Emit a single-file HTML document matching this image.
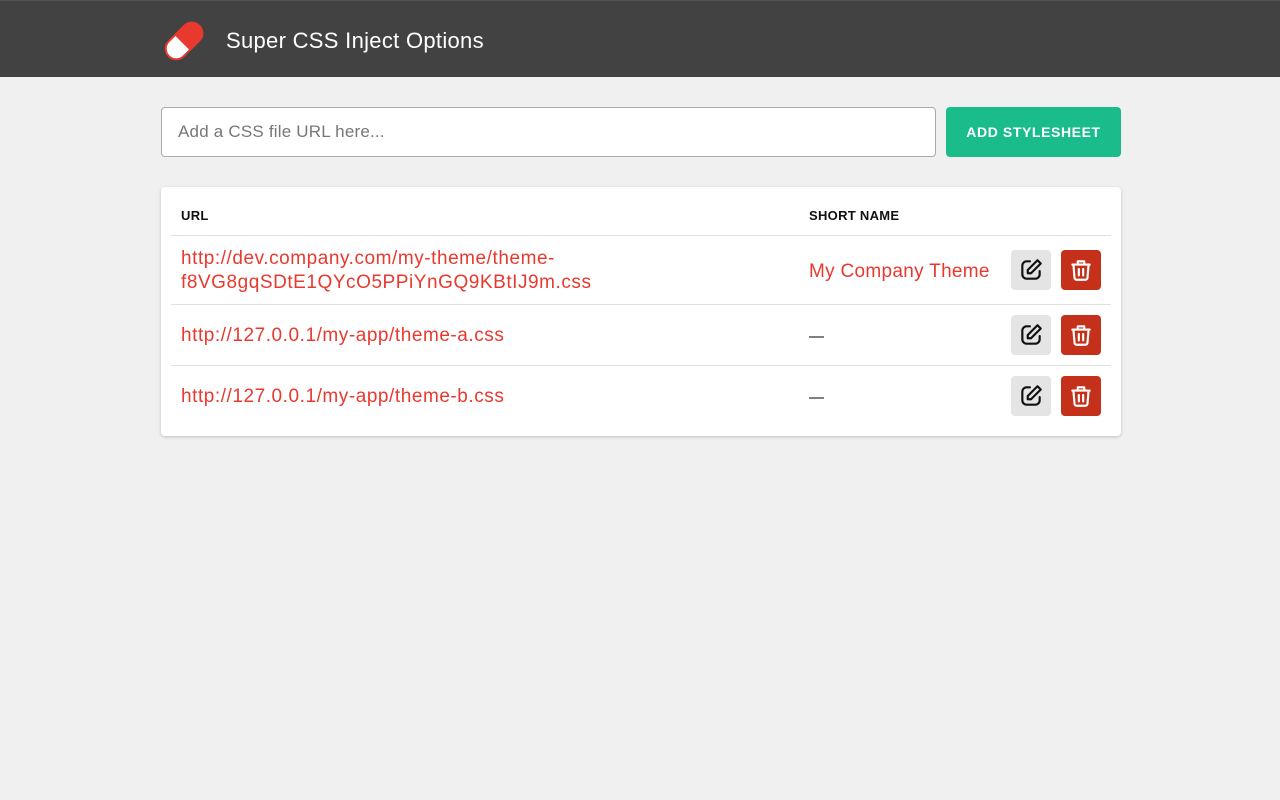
<!DOCTYPE html>
<html><head><meta charset="utf-8"><style>
*{box-sizing:border-box;margin:0;padding:0}
body{width:1280px;height:800px;background:#f0f0f0;font-family:"Liberation Sans",sans-serif;overflow:hidden}
.hdr{height:77px;background:#424242;border-top:1px solid #555;position:relative}
.hdr .title{position:absolute;left:226px;top:27px;color:#fff;font-size:22px;letter-spacing:.3px}
.logo{position:absolute;left:161px;top:17px}
.inp{position:absolute;left:161px;top:107px;width:775px;height:50px;border:1px solid #aaa;border-radius:4px;background:#fff;padding:0 16px;line-height:48px;color:#777;font-size:17px;letter-spacing:.2px}
.btn{position:absolute;left:946px;top:107px;width:175px;height:50px;background:#1abc8c;border-radius:4px;color:#fff;font-weight:bold;font-size:14px;text-align:center;line-height:50px;letter-spacing:.6px}
.card{position:absolute;left:161px;top:187px;width:960px;height:249px;background:#fff;border-radius:4px;box-shadow:0 1px 3px rgba(0,0,0,.2)}
.th{position:absolute;top:21px;font-size:13px;font-weight:bold;color:#111;letter-spacing:.3px}
.line{position:absolute;left:10px;right:10px;height:1px;background:#e0e0e0}
.u{position:absolute;left:20px;color:#e8392f;font-size:19px;line-height:24px;letter-spacing:.55px}
.n{position:absolute;left:648px;font-size:19px;line-height:24px;letter-spacing:.3px}
.dash{font-size:15px}
.e,.d{position:absolute;width:40px;height:40px;border-radius:4px;display:flex;align-items:center;justify-content:center}
.e{left:850px;background:#e4e4e4}
.d{left:900px;background:#c4301a}
</style></head><body>
<div class="hdr">
<svg class="logo" width="46" height="46" viewBox="0 0 46 46">
<g transform="rotate(-45 23 23)">
<rect x="1.5" y="12.5" width="43" height="21" rx="10.5" fill="#fff" stroke="#e8392f" stroke-width="2"/>
<path d="M20.5 11.5 H34 A11.5 11.5 0 0 1 34 34.5 H20.5 Z" fill="#e8392f"/>
</g></svg>
<div class="title">Super CSS Inject Options</div>
</div>
<div class="inp">Add a CSS file URL here...</div>
<div class="btn">ADD STYLESHEET</div>
<div class="card">
<div class="th" style="left:20px">URL</div>
<div class="th" style="left:648px">SHORT NAME</div>
<div class="line" style="top:48px"></div>
<div class="u" style="top:60px">http://dev.company.com/my-theme/theme-<br>f8VG8gqSDtE1QYcO5PPiYnGQ9KBtIJ9m.css</div>
<div class="n" style="top:73px;color:#e8392f">My Company Theme</div>
<div class="e" style="top:63px"><svg width="26" height="26" viewBox="0 0 24 24" fill="none" stroke="#111" stroke-width="2" stroke-linecap="round" stroke-linejoin="round"><path d="M11 4H8a4 4 0 0 0-4 4v8a4 4 0 0 0 4 4h8a4 4 0 0 0 4-4v-3"/><path d="M18 3l3 3-9 9H9v-3z"/></svg></div>
<div class="d" style="top:63px"><svg width="26" height="26" viewBox="0 0 24 24" fill="none" stroke="#fff" stroke-width="2" stroke-linecap="round" stroke-linejoin="round"><path d="M4 7h16M10 11v6M14 11v6M5 7l1 12a2 2 0 0 0 2 2h8a2 2 0 0 0 2-2l1-12M9 7V4h6v3"/></svg></div>
<div class="line" style="top:117px"></div>
<div class="u" style="top:137px">http://127.0.0.1/my-app/theme-a.css</div>
<div class="n" style="top:137px"><span class="dash">—</span></div>
<div class="e" style="top:128px"><svg width="26" height="26" viewBox="0 0 24 24" fill="none" stroke="#111" stroke-width="2" stroke-linecap="round" stroke-linejoin="round"><path d="M11 4H8a4 4 0 0 0-4 4v8a4 4 0 0 0 4 4h8a4 4 0 0 0 4-4v-3"/><path d="M18 3l3 3-9 9H9v-3z"/></svg></div>
<div class="d" style="top:128px"><svg width="26" height="26" viewBox="0 0 24 24" fill="none" stroke="#fff" stroke-width="2" stroke-linecap="round" stroke-linejoin="round"><path d="M4 7h16M10 11v6M14 11v6M5 7l1 12a2 2 0 0 0 2 2h8a2 2 0 0 0 2-2l1-12M9 7V4h6v3"/></svg></div>
<div class="line" style="top:178px"></div>
<div class="u" style="top:198px">http://127.0.0.1/my-app/theme-b.css</div>
<div class="n" style="top:198px"><span class="dash">—</span></div>
<div class="e" style="top:189px"><svg width="26" height="26" viewBox="0 0 24 24" fill="none" stroke="#111" stroke-width="2" stroke-linecap="round" stroke-linejoin="round"><path d="M11 4H8a4 4 0 0 0-4 4v8a4 4 0 0 0 4 4h8a4 4 0 0 0 4-4v-3"/><path d="M18 3l3 3-9 9H9v-3z"/></svg></div>
<div class="d" style="top:189px"><svg width="26" height="26" viewBox="0 0 24 24" fill="none" stroke="#fff" stroke-width="2" stroke-linecap="round" stroke-linejoin="round"><path d="M4 7h16M10 11v6M14 11v6M5 7l1 12a2 2 0 0 0 2 2h8a2 2 0 0 0 2-2l1-12M9 7V4h6v3"/></svg></div>
</div>
</body></html>
